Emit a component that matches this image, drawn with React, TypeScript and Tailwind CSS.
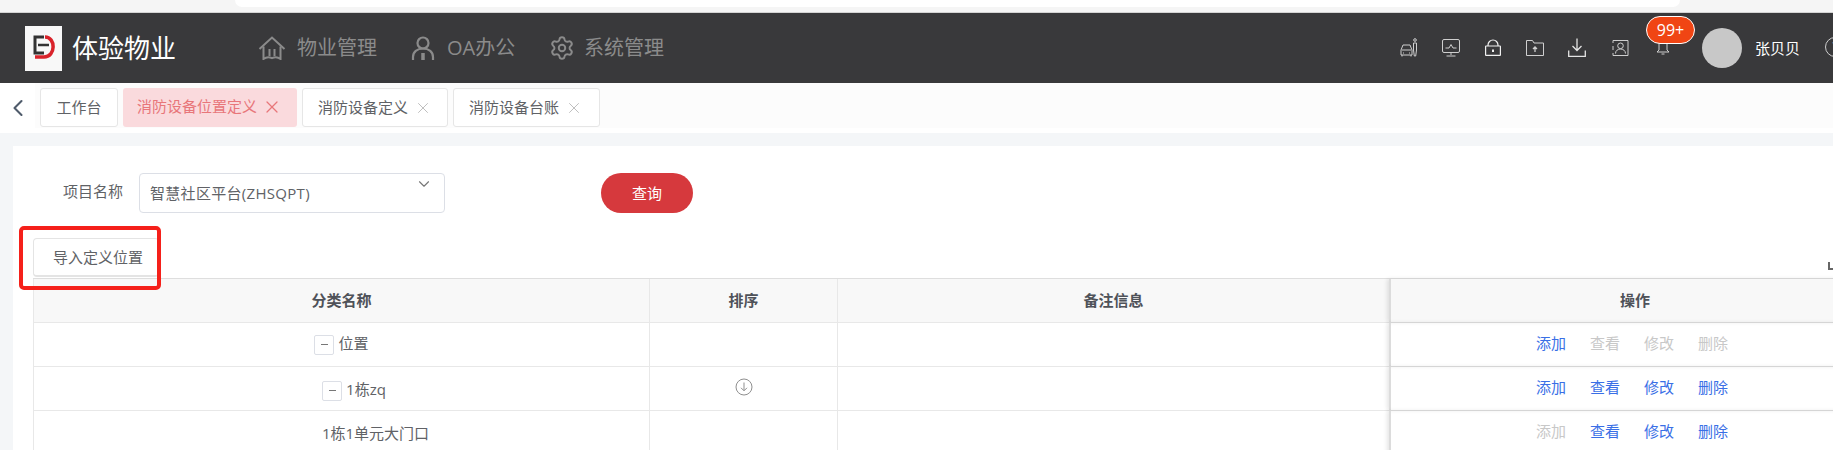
import { Settings, X, ChevronLeft, ChevronDown } from "lucide-react"

const tabs = [
  { label: "工作台", width: "w-[78px] justify-center" },
  { label: "消防设备位置定义", width: "w-[174px] pl-[14px] pb-[2px]", active: true, closable: true },
  { label: "消防设备定义", width: "w-[146px] pl-[15px]", closable: true },
  { label: "消防设备台账", width: "w-[147px] pl-[15px]", closable: true },
]

function Logo() {
  return (
    <div className="flex h-[45px] w-[37px] items-center justify-center bg-[#f8f8f8]">
      <svg width="24" height="28" viewBox="0 0 24 28" fill="none">
        <path d="M12 3H3v16h9" stroke="#333" strokeWidth="3" />
        <path d="M6 11h11" stroke="#333" strokeWidth="2.5" />
        <path d="M3 23h9c12 0 12-20 1-20" stroke="#d9232b" strokeWidth="3.5" />
      </svg>
    </div>
  )
}

function HomeIcon() {
  return (
    <svg width="28" height="24" viewBox="0 0 28 24" fill="none" stroke="#8b8b8b" strokeWidth="2">
      <path d="M1.500 13 14 1.500 26.500 13" />
      <path d="M5.500 10.500v12.500q4-3 8.500-.8 4.500-2.200 8.500.8V10.500" />
      <path d="M11.500 13v7M16.500 13v7" />
    </svg>
  )
}

function PersonIcon() {
  return (
    <svg width="24" height="24" viewBox="0 0 24 24" fill="none" stroke="#8b8b8b" strokeWidth="2.200">
      <circle cx="12" cy="7" r="5.500" />
      <path d="M2 24v-3c0-5 4-8.500 10-8.500S22 16 22 21v3" />
      <path d="M12 17v7" strokeWidth="3.500" />
    </svg>
  )
}

function HeaderIcons() {
  return (
    <div className="flex items-center text-[#cfcfcf]">
      <svg width="18" height="19" viewBox="0 0 18 19" fill="none" stroke="currentColor" strokeWidth="1">
        <path d="M1 17v-5l2-5h7l2 5v5z" />
        <path d="M2 12h9M3 15h1M9 15h1M2 17v1.500M11 17v1.500" />
        <circle cx="15" cy="2" r="1.300" />
        <path d="M13.500 5h3v7l-.8 6h-1.400l-.8-6z" />
      </svg>
      <svg className="ml-[24px]" width="18" height="18" viewBox="0 0 18 18" fill="none" stroke="currentColor" strokeWidth="1">
        <rect x=".5" y=".5" width="17" height="13" rx="1.500" />
        <path d="M3.500 9 7 9 9 5.500 11 9h3.500M9 14v2M4.500 17h9" />
      </svg>
      <svg className="ml-[25px]" width="16" height="17" viewBox="0 0 16 17" fill="none" stroke="#f0f0f0" strokeWidth="1.200">
        <path d="M3 7V6a5 5 0 0 1 10 0v1" />
        <rect x=".6" y="7" width="14.800" height="9.400" rx=".5" />
        <path d="M8 10.500v2.500" strokeWidth="2" />
      </svg>
      <svg className="ml-[25px]" width="18" height="16" viewBox="0 0 18 16" fill="none" stroke="currentColor" strokeWidth="1">
        <path d="M.5 1v14.500h17V3H8L6.500.5H.5z" />
        <path d="M9 12V8M7 9l2-2 2 2" strokeWidth="1.300" />
      </svg>
      <svg className="ml-[24px]" width="18" height="19" viewBox="0 0 18 19" fill="none" stroke="#e4e4e4" strokeWidth="1.300">
        <path d="M9 .5V12M4.500 8 9 12.500 13.500 8" />
        <path d="M.7 12.500v5.800h16.600v-5.800" />
      </svg>
      <svg className="ml-[26px]" width="17" height="18" viewBox="0 0 17 18" fill="none" stroke="currentColor" strokeWidth="1">
        <path d="M1 4V1.500h15v15H1V14M1 7v4" />
        <circle cx="8.500" cy="6.800" r="2.800" />
        <path d="M3.500 14.500c0-6 10-6 10 0" />
      </svg>
      <div className="relative ml-[27px] h-[19px] w-[14px]">
        <svg className="absolute left-0 top-0" width="14" height="19" viewBox="0 0 14 19" fill="none" stroke="currentColor" strokeWidth="1">
          <path d="M3 1v11l-2 2h12l-2-2V1M5.500 16h3" />
        </svg>
        <div className="absolute left-[-10px] top-[-22px] flex h-[28px] w-[49px] items-center justify-center rounded-full border border-white bg-[#f04514] text-[16px] text-white">
          99+
        </div>
      </div>
    </div>
  )
}

function TreeToggle() {
  return (
    <span className="mr-[4px] flex h-[20px] w-[20px] items-center justify-center rounded-[2px] border border-[#dcdfe6] text-[#777]">
      <span className="h-px w-[7px] bg-[#777]" />
    </span>
  )
}

function Actions({ add = true, rest = true }: { add?: boolean; rest?: boolean }) {
  const on = "text-[#3a6fe6]"
  const off = "text-[#c8c8c8]"
  return (
    <div className="mt-[-2px] flex items-center justify-center gap-[24px] pr-[6px]">
      <span className={add ? on : off}>添加</span>
      <span className={rest ? on : off}>查看</span>
      <span className={rest ? on : off}>修改</span>
      <span className={rest ? on : off}>删除</span>
    </div>
  )
}

const rowClass = "grid h-[44px] grid-cols-[616px_188px_552px_490px] border-b border-[#e8e8e8] items-center text-center"

export default function App() {
  return (
    <div className="h-[450px] w-[1833px] overflow-hidden bg-[#f4f6f8] font-['Open_Sans','Noto_Sans_CJK_SC',sans-serif] text-[15px] text-[#606266]">
      {/* browser strip */}
      <div className="h-[13px] border-b border-[#d4d4d4] bg-[#f5f5f5]">
        <div className="ml-[235px] h-[7px] w-[1445px] rounded-b-[8px] bg-white" />
      </div>

      <header className="flex h-[70px] w-[1900px] items-center bg-[#39393b] pl-[25px]">
        <Logo />
        <div className="ml-[10px] w-[105px] whitespace-nowrap text-[26px] text-white">体验物业</div>
        <nav className="ml-[81px] flex w-[407px] shrink-0 items-center whitespace-nowrap text-[20px] text-[#8b8b8b]">
          <HomeIcon />
          <span className="ml-[11px]">物业管理</span>
          <span className="ml-[34px]"><PersonIcon /></span>
          <span className="ml-[12px] w-[69px]">OA办公</span>
          <Settings className="ml-[33px]" size={26} strokeWidth={1.800} />
          <span className="ml-[9px]">系统管理</span>
        </nav>
        <div className="ml-[735px] mt-[-1px] shrink-0"><HeaderIcons /></div>
        <div className="ml-[32px] h-[40px] w-[40px] shrink-0 rounded-full bg-[#c8c8c8]" />
        <span className="ml-[13px] shrink-0 whitespace-nowrap text-white">张贝贝</span>
        <div className="ml-[25px] mt-[-3px] flex h-[20px] w-[20px] shrink-0 items-center justify-center rounded-full border border-[#cfcfcf] text-[13px] text-[#cfcfcf]">?</div>
      </header>

      {/* tab bar */}
      <div className="flex h-[50px] bg-white">
        <div className="flex w-[35px] items-center justify-center text-[#4f5b6b]">
          <ChevronLeft className="mb-[1px]" size={28} strokeWidth={1.800} />
        </div>
        <div className="flex h-[45px] flex-1 items-start gap-[5px] bg-[#fcfcfc] pl-[5px] pt-[5px]">
          {tabs.map((tab) => (
            <div
              key={tab.label}
              className={
                tab.active
                  ? `flex h-[39px] ${tab.width} items-center rounded-[3px] bg-[#fadadd] text-[#e8767a]`
                  : `flex h-[39px] ${tab.width} items-center rounded-[3px] border border-[#e6e6e6] bg-white`
              }
            >
              {tab.label}
              {tab.closable && (
                <X
                  className={tab.active ? "ml-[5px]" : "ml-[6px]"}
                  size={tab.active ? 20 : 18}
                  strokeWidth={tab.active ? 1.500 : 1}
                  color={tab.active ? "#e8767a" : "#aaa"}
                />
              )}
            </div>
          ))}
        </div>
      </div>

      <main className="ml-[13px] mt-[13px] h-[400px] w-[1900px] bg-white pl-[20px] pt-[27px]">
        <div className="flex items-center">
          <label className="ml-[30px] mt-[-4px] w-[61px] whitespace-nowrap">项目名称</label>
          <div className="relative ml-[15px] flex h-[40px] w-[306px] items-center rounded-[4px] border border-[#dcdfe6] pl-[10px] tracking-[0.3px]">
            智慧社区平台(ZHSQPT)
            <ChevronDown className="absolute right-[11px] top-[1px]" size={18} color="#777" strokeWidth={1.500} />
          </div>
          <button className="ml-[156px] h-[40px] w-[92px] rounded-[20px] bg-[#d6393d] text-white">查询</button>
        </div>

        <div className="relative mt-[25px]">
          <button className="block h-[39px] w-[126px] rounded-[4px] border border-[#e4e4e4] border-b-2 pl-[19px] text-left">导入定义位置</button>
          {/* annotation around the import button */}
          <div className="absolute left-[-14px] top-[-12px] h-[64px] w-[142px] rounded-[5px] border-4 border-[#f5201a]" />
          <div className="absolute left-[1795px] top-[24px] h-[8px] w-[8px] border-b-2 border-l-2 border-[#666]" />
        </div>

        <div className="mt-px w-[1846px] border-t border-[#dedede]">
          <div className={`${rowClass} bg-[#f8f8f8] font-bold text-[#4f5259]`}>
            <div className="flex h-full items-center justify-center border-l border-[#e8e8e8]">分类名称</div>
            <div className="flex h-full items-center justify-center border-l border-[#e8e8e8]">排序</div>
            <div className="flex h-full items-center justify-center border-l border-[#e8e8e8]">备注信息</div>
            <div className="flex h-full items-center justify-center border-l-2 border-[#dcdcdc] shadow-[-2px_0_4px_rgba(0,0,0,0.1)]">操作</div>
          </div>

          <div className={rowClass}>
            <div className="flex h-full items-center justify-center border-l border-[#e8e8e8]">
              <TreeToggle /><span className="mt-[-2px]">位置</span>
            </div>
            <div className="h-full border-l border-[#e8e8e8]" />
            <div className="h-full border-l border-[#e8e8e8]" />
            <div className="flex h-full items-center justify-center border-l-2 border-[#dcdcdc] shadow-[-2px_0_4px_rgba(0,0,0,0.1)]">
              <Actions rest={false} />
            </div>
          </div>

          <div className={rowClass}>
            <div className="flex h-full items-center justify-center border-l border-[#e8e8e8] pl-[25px] pt-[4px]">
              <TreeToggle /><span className="mt-[-2px]">1栋zq</span>
            </div>
            <div className="flex h-full items-center justify-center border-l border-[#e8e8e8]">
              <svg className="mb-[3px]" width="18" height="18" viewBox="0 0 18 18" fill="none" stroke="#8f8f8f" strokeWidth="1">
                <circle cx="9" cy="9" r="8" />
                <path d="M9 4.500v8M6 9.800l3 3 3-3" />
              </svg>
            </div>
            <div className="h-full border-l border-[#e8e8e8]" />
            <div className="flex h-full items-center justify-center border-l-2 border-[#dcdcdc] shadow-[-2px_0_4px_rgba(0,0,0,0.1)]">
              <Actions />
            </div>
          </div>

          <div className={rowClass}>
            <div className="flex h-full items-center justify-center border-l border-[#e8e8e8] pl-[68px] pt-[1px]">1栋1单元大门口</div>
            <div className="h-full border-l border-[#e8e8e8]" />
            <div className="h-full border-l border-[#e8e8e8]" />
            <div className="flex h-full items-center justify-center border-l-2 border-[#dcdcdc] shadow-[-2px_0_4px_rgba(0,0,0,0.1)]">
              <Actions add={false} />
            </div>
          </div>
        </div>
      </main>
    </div>
  )
}
